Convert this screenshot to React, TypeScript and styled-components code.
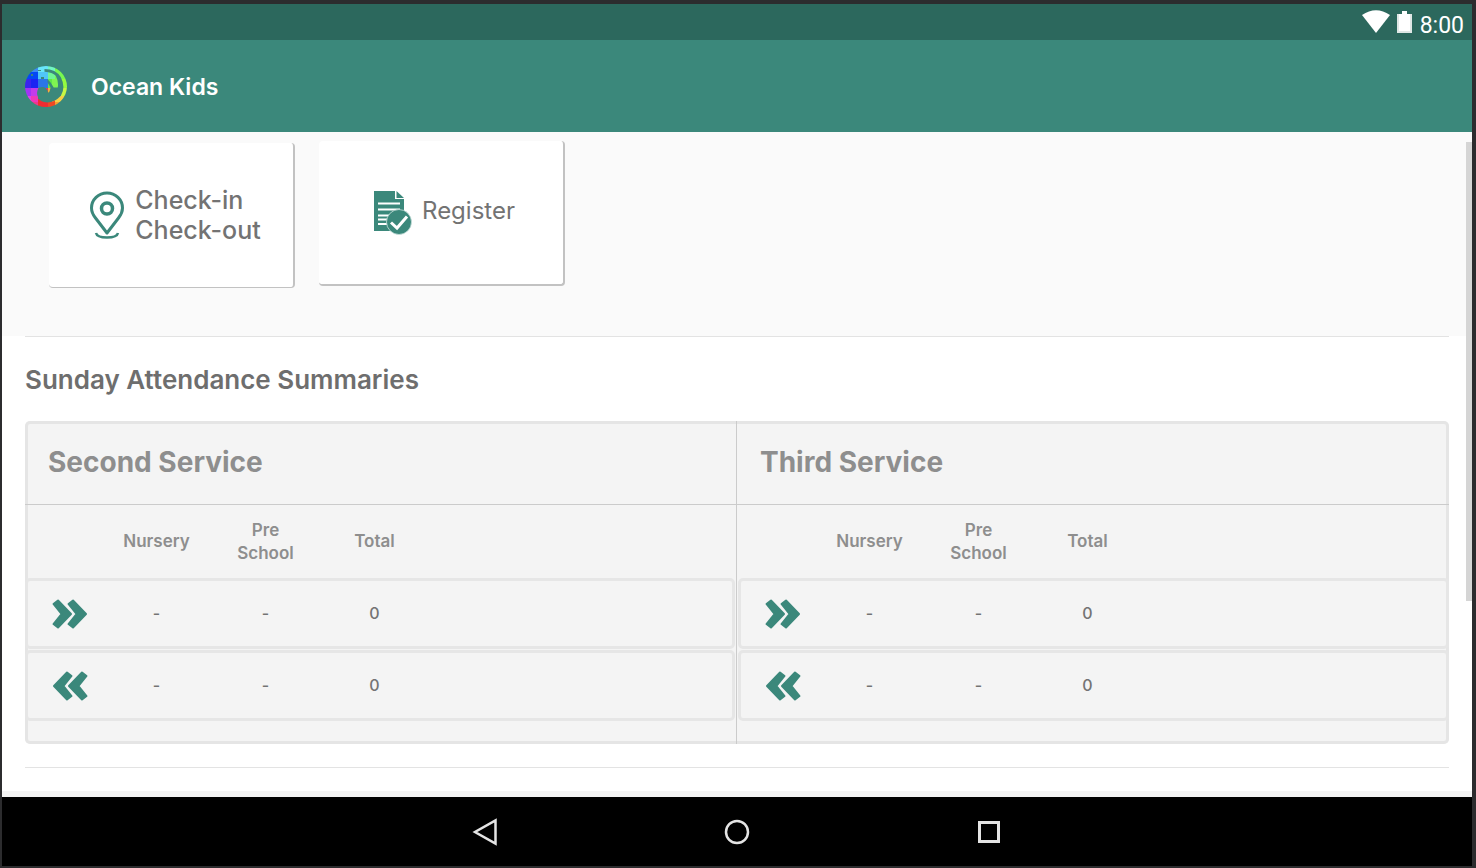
import React from 'react';
import styled, { createGlobalStyle } from 'styled-components';

const teal = '#3b887b';

const GlobalStyle = createGlobalStyle`
  *, *::before, *::after { box-sizing: border-box; }
  body { margin: 0; background: #2c2c2e; font-family: Inter, "Liberation Sans", sans-serif; }
  h1, h2, h3 { margin: 0; }
  button { font: inherit; border: 0; padding: 0; background: none; cursor: pointer; }
`;

const Device = styled.div`
  display: flex;
  flex-direction: column;
  min-height: 100vh;
  border: solid #2c2c2e;
  border-width: 4px 4px 2px 2px;
`;

const StatusBar = styled.div`
  display: flex;
  justify-content: flex-end;
  align-items: center;
  gap: 6px;
  height: 36px;
  padding: 0 8px;
  background: #2c685d;
  color: #fff;
`;

const Clock = styled.time`
  font: 400 23px/32px Roboto, sans-serif;
  padding-top: 8px;
  margin-left: 2px;
`;

const AppBar = styled.header`
  display: flex;
  align-items: center;
  gap: 24px;
  height: 92px;
  padding: 0 23px;
  background: ${teal};
  color: #fff;
`;

const AppTitle = styled.h1`
  padding-top: 2px;
  font-size: 23px;
  line-height: 32px;
  font-weight: 600;
`;

const Content = styled.main`
  position: relative;
  flex: 1;
  background: #f4f4f4;
`;

const ScrollThumb = styled.div`
  position: absolute;
  top: 10px;
  right: 0;
  width: 6px;
  height: 69%;
  background: #d5d5d5;
`;

const Actions = styled.section`
  display: flex;
  align-items: flex-end;
  gap: 24px;
  height: 204px;
  padding: 0 47px 48px;
  background: #fafafa;
`;

const ActionCard = styled.button<{ $raised?: boolean }>`
  display: flex;
  align-items: center;
  justify-content: center;
  gap: 10px;
  width: 246px;
  height: 145px;
  margin-bottom: ${p => (p.$raised ? 2 : 0)}px;
  padding-left: ${p => (p.$raised ? 6 : 8)}px;
  background: #fff;
  border: solid #c2c2c2;
  border-width: 0 2px ${p => (p.$raised ? 2 : 1)}px 0;
  border-radius: 4px;
  color: #737373;
  text-align: left;
`;

const ActionLabel = styled.span<{ $light?: boolean }>`
  padding-bottom: ${p => (p.$light ? 4 : 0)}px;
  font-size: ${p => (p.$light ? 24 : 25)}px;
  line-height: 30px;
  font-weight: ${p => (p.$light ? 400 : 500)};
`;

const Summaries = styled.section`
  padding: 0 23px 23px;
  background: #fff;
`;

const Divider = styled.hr`
  height: 1px;
  margin: 0;
  border: 0;
  background: #e3e3e3;
`;

const SectionTitle = styled.h2`
  padding: 27px 0 25px;
  font-size: 26px;
  line-height: 32px;
  font-weight: 600;
  color: #6e6e6e;
`;

const Panel = styled.div`
  display: grid;
  grid-template-columns: 1fr 1fr;
  margin-bottom: 23px;
  background: #f4f4f4;
  box-shadow: inset 0 0 0 3px #e5e5e5;
  border-radius: 5px;
`;

const Table = styled.table`
  display: block;
  tbody, thead { display: block; }
`;

const Service = styled.article`
  padding-bottom: 22px;
  &:first-child { border-right: 1px solid #cbcbcb; }
  &:first-child ${Table} { padding-right: 1px; }
  &:last-child ${Table} { padding-left: 1px; }
`;

const ServiceTitle = styled.h3`
  height: 84px;
  padding: 24px 23px 0;
  border-bottom: 1px solid #cbcbcb;
  font-size: 28px;
  line-height: 34px;
  font-weight: 700;
  color: #8e8e8e;
`;

const Row = styled.tr`
  display: grid;
  grid-template-columns: 74px repeat(3, 109px);
  align-items: center;
  height: 71px;
  margin-bottom: 1px;
  border: 3px solid #e6e6e6;
  border-radius: 5px;
`;

const HeadRow = styled(Row)`
  height: 73px;
  margin-bottom: 0;
  border-color: transparent;
`;

const Cell = styled.td`
  padding: 0;
  text-align: center;
  font-size: 16px;
  line-height: 23px;
  font-weight: 500;
  color: #737373;
`;

const HeadCell = styled.th`
  padding: 0 20px;
  text-align: center;
  font-size: 17px;
  line-height: 23px;
  font-weight: 600;
  color: #8e8e8e;
`;

const IconCell = styled.th`
  padding: 0 0 0 24px;
  line-height: 0;
  text-align: left;
`;

const NavBar = styled.nav`
  display: flex;
  justify-content: center;
  align-items: center;
  gap: 204px;
  height: 69px;
  background: #000;
`;

const NavButton = styled.button`
  display: grid;
  place-items: center;
  width: 48px;
  height: 48px;
`;

const WifiIcon = () => (
  <svg width="30" height="24" viewBox="0 0 30 24" aria-hidden="true">
    <path d="M1 5Q15-4.500 29 5L15 23Z" fill="#fff" />
  </svg>
);

const BatteryIcon = () => (
  <svg width="15" height="22" viewBox="0 0 15 22" aria-hidden="true">
    <path d="M5 0h5v3h5v19H0V3h5Z" fill="#dfe7e5" />
    <path d="M5 0h5v3h3v17H2V3h3Z" fill="#fff" />
  </svg>
);

const mosaic: [number, number, number, number, string][] = [
  [0, 0, 6, 7, '#0a5cf5'], [5, 0, 8, 6, '#3b8af3'], [13, 0, 9, 6, '#69e6fa'], [22, 0, 7, 6, '#72f5c3'], [29, 0, 12, 13, '#78f850'],
  [0, 6, 13, 7, '#0448f5'], [13, 6, 9, 7, '#50c6f7'], [22, 6, 7, 7, '#70f596'],
  [0, 13, 6, 8, '#3a24ef'], [6, 13, 7, 8, '#1c24f2'], [13, 13, 9, 8, '#2c76e6'], [22, 13, 4, 8, '#5ee84a'], [26, 13, 9, 8, '#80f452'], [35, 13, 6, 8, '#94fb40'],
  [0, 21, 6, 8, '#a234f6'], [6, 21, 7, 8, '#c43bea'], [13, 21, 9, 8, '#e43f50'], [22, 21, 4, 8, '#f5b13a'], [35, 21, 6, 8, '#c6f744'],
  [0, 29, 6, 6, '#e040ee'], [6, 29, 7, 6, '#ee38b8'], [26, 29, 15, 6, '#f6d044'],
  [0, 35, 13, 6, '#ef378c'], [13, 32, 9, 9, '#ee2c32'], [22, 32, 7, 9, '#ee4824'], [29, 35, 6, 6, '#f7a030'],
];

const Logo = () => (
  <svg width="42" height="41" viewBox="0 0 41 40" shapeRendering="crispEdges" aria-hidden="true">
    <clipPath id="wave">
      <path
        clipRule="evenodd"
        d="M20.500 0A20.500 20 0 0 1 20.500 40A20.500 20 0 0 1 20.500 0Z M19 3Q30 3 35 11Q40 21 35 29Q29 35.500 22 35.500Q14 35 13 31Q10 25 14 21Q18 20 20 21.500L22 24L22.500 26L24 25L25 21L22 16L22 13L25 16L28 21L32 21Q33 15 30 9.500Q27 6 19 5.500Z"
      />
    </clipPath>
    <g clipPath="url(#wave)">
      {mosaic.map(([x, y, w, h, fill]) => (
        <rect key={`${x}-${y}`} x={x} y={y} width={w} height={h} fill={fill} />
      ))}
    </g>
    <path d="M16 11h3v2h-3ZM6 8h2v2h-2ZM13 4h3v1h-3Z" fill={teal} />
  </svg>
);

const PinIcon = () => (
  <svg width="36" height="48" viewBox="0 0 36 48" fill="none" stroke={teal} strokeWidth="3" aria-hidden="true">
    <path d="M18 42L6.500 27Q2.500 22 2.500 17A15.500 15 0 0 1 33.500 17Q33.500 22 29.500 27Z" strokeLinejoin="round" />
    <circle cx="18" cy="17.500" r="5.500" strokeWidth="3.500" />
    <path d="M7 42Q8 46.500 18 46.500T29 42" strokeWidth="2.500" />
  </svg>
);

const RegisterIcon = () => (
  <svg width="39" height="44" viewBox="0 0 39 44" aria-hidden="true">
    <path d="M1 0H22V8H31V40H1Z" fill={teal} />
    <path d="M23.500 0L31 7H23.500Z" fill={teal} />
    <path d="M5 12.500H27M5 18.500H27M5 24.500H18M5 28.500H14M5 33H14" stroke="#fff" strokeWidth="1.800" />
    <circle cx="26" cy="31" r="12.500" fill={teal} stroke="#c9e0dc" strokeWidth=".8" />
    <path d="M18 31.500L24 37L34 25.500" stroke="#fff" strokeWidth="3" fill="none" />
  </svg>
);

const Chevrons = ({ back }: { back?: boolean }) => (
  <svg width="36" height="30" viewBox="0 0 36 30" role="img" aria-label={back ? 'Checked out' : 'Checked in'}>
    <g
      transform={back ? 'translate(36 0) scale(-1 1)' : undefined}
      fill={teal}
      stroke={teal}
      strokeWidth="2"
      strokeLinejoin="round"
    >
      <path d="M1.500 5L6 1.500L19 15L6 28.500L1.500 25L9.500 15Z" />
      <path d="M16.500 5L21 1.500L34 15L21 28.500L16.500 25L24.500 15Z" />
    </g>
  </svg>
);

const services = ['Second Service', 'Third Service'];

export default function App() {
  return (
    <Device>
      <GlobalStyle />
      <StatusBar>
        <WifiIcon />
        <BatteryIcon />
        <Clock>8:00</Clock>
      </StatusBar>
      <AppBar>
        <Logo />
        <AppTitle>Ocean Kids</AppTitle>
      </AppBar>
      <Content>
        <Actions>
          <ActionCard>
            <PinIcon />
            <ActionLabel>Check-in<br />Check-out</ActionLabel>
          </ActionCard>
          <ActionCard $raised>
            <RegisterIcon />
            <ActionLabel $light>Register</ActionLabel>
          </ActionCard>
        </Actions>
        <Summaries>
          <Divider />
          <SectionTitle>Sunday Attendance Summaries</SectionTitle>
          <Panel>
            {services.map(name => (
              <Service key={name}>
                <ServiceTitle>{name}</ServiceTitle>
                <Table aria-label={name}>
                  <thead>
                    <HeadRow>
                      <td />
                      <HeadCell scope="col">Nursery</HeadCell>
                      <HeadCell scope="col">Pre School</HeadCell>
                      <HeadCell scope="col">Total</HeadCell>
                    </HeadRow>
                  </thead>
                  <tbody>
                    {[false, true].map(back => (
                      <Row key={String(back)}>
                        <IconCell scope="row"><Chevrons back={back} /></IconCell>
                        <Cell>-</Cell>
                        <Cell>-</Cell>
                        <Cell>0</Cell>
                      </Row>
                    ))}
                  </tbody>
                </Table>
              </Service>
            ))}
          </Panel>
          <Divider />
        </Summaries>
        <ScrollThumb />
      </Content>
      <NavBar>
        <NavButton aria-label="Back">
          <svg width="26" height="28" viewBox="0 0 26 28" fill="none" stroke="#e4e4e4" strokeWidth="2.500">
            <path d="M23.500 2.500V25.500L3 14Z" />
          </svg>
        </NavButton>
        <NavButton aria-label="Home">
          <svg width="26" height="26" viewBox="0 0 26 26" fill="none" stroke="#e4e4e4" strokeWidth="2.500">
            <circle cx="13" cy="13" r="11" />
          </svg>
        </NavButton>
        <NavButton aria-label="Recent apps">
          <svg width="24" height="24" viewBox="0 0 24 24" fill="none" stroke="#e4e4e4" strokeWidth="3">
            <rect x="2.500" y="2.500" width="19" height="19" />
          </svg>
        </NavButton>
      </NavBar>
    </Device>
  );
}
